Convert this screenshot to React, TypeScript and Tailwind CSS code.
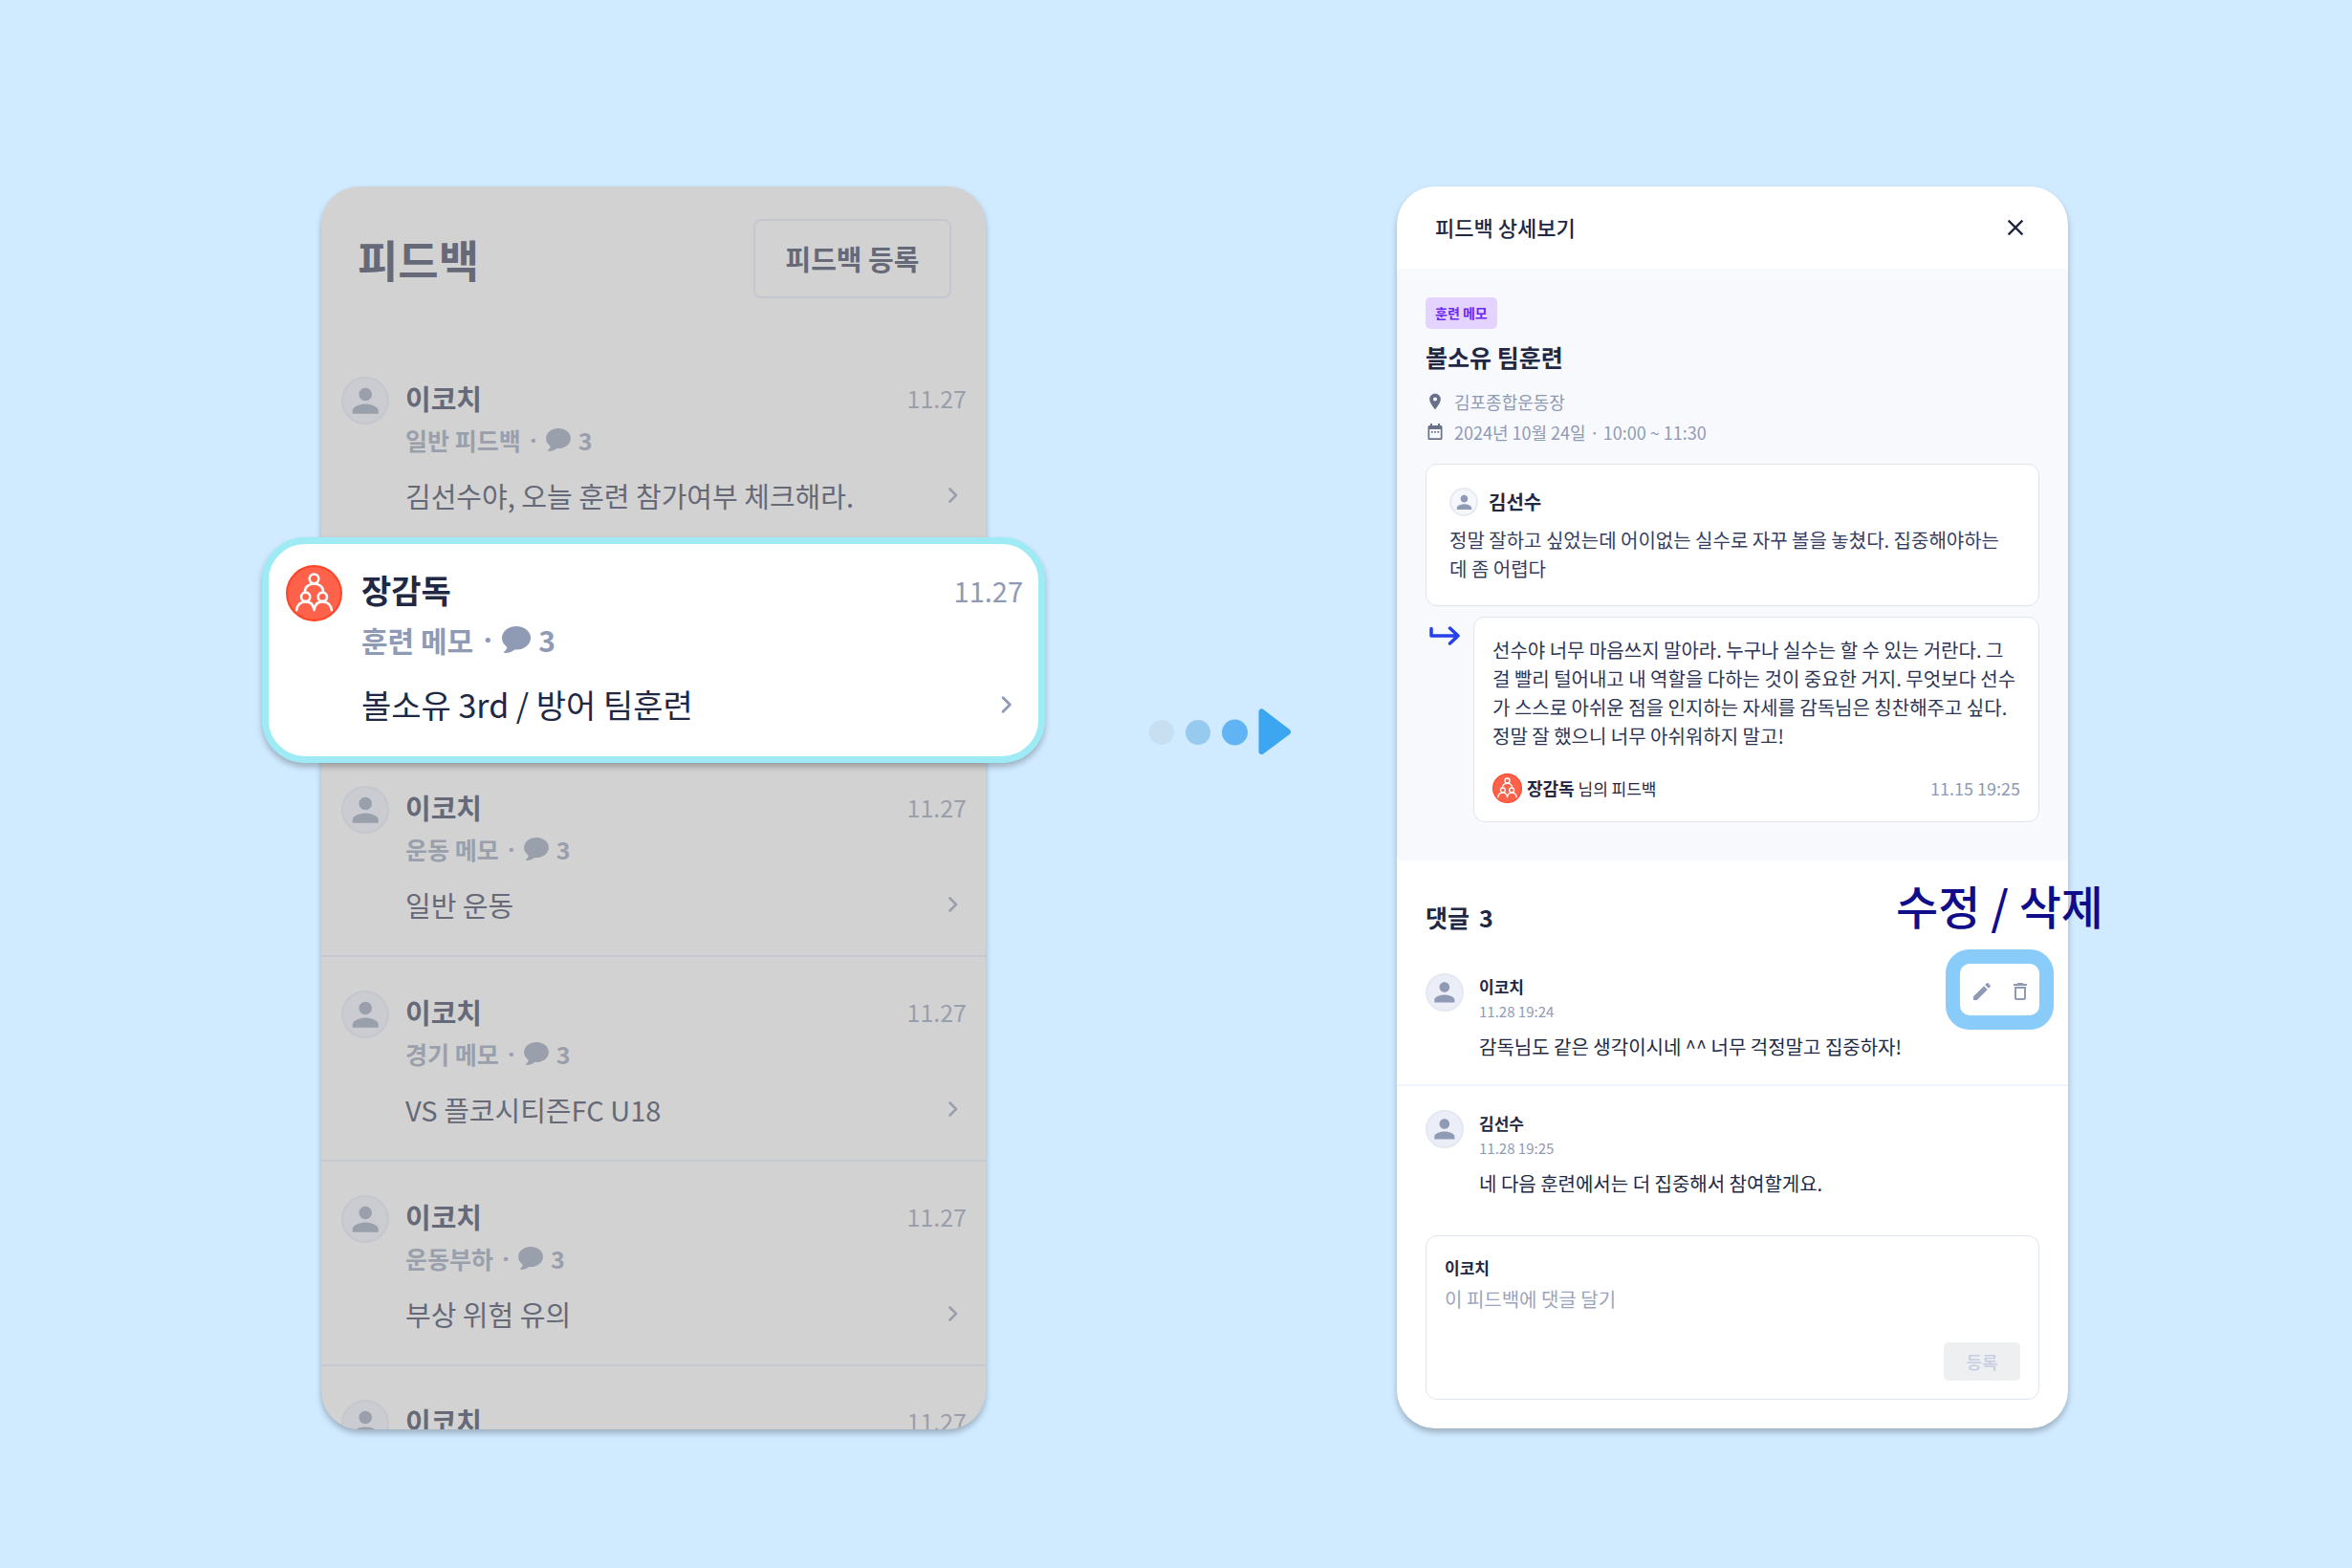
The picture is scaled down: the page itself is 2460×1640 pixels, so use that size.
import { MdClose, MdDeleteOutline, MdEdit, MdPerson, MdPlace } from "react-icons/md";

type Feedback = { author: string; date: string; kind?: string; body?: string; count?: number };
type Reply = { author: string; time: string; body: string; editable?: boolean };

const selected: Feedback = { author: "장감독", kind: "훈련 메모", body: "볼소유 3rd / 방어 팀훈련", date: "11.27", count: 3 };

const feedbacks: Feedback[] = [
  { author: "이코치", kind: "일반 피드백", body: "김선수야, 오늘 훈련 참가여부 체크해라.", date: "11.27", count: 3 },
  selected,
  { author: "이코치", kind: "운동 메모", body: "일반 운동", date: "11.27", count: 3 },
  { author: "이코치", kind: "경기 메모", body: "VS 플코시티즌FC U18", date: "11.27", count: 3 },
  { author: "이코치", kind: "운동부하", body: "부상 위험 유의", date: "11.27", count: 3 },
  { author: "이코치", date: "11.27" },
];

const replies: Reply[] = [
  { author: "이코치", time: "11.28 19:24", body: "감독님도 같은 생각이시네 ^^ 너무 걱정말고 집중하자!", editable: true },
  { author: "김선수", time: "11.28 19:25", body: "네 다음 훈련에서는 더 집중해서 참여할게요." },
];

function Chevron({ className }: { className: string }) {
  return (
    <svg viewBox="0 0 12 18" className={className} fill="none" stroke="currentColor" strokeWidth="2.6" strokeLinecap="round" strokeLinejoin="round" aria-hidden="true">
      <path d="M2.5 2.5 9 9l-6.500 6.500" />
    </svg>
  );
}

function Bubble({ className }: { className: string }) {
  return (
    <svg viewBox="0 0 88 82" className={className} fill="currentColor" aria-hidden="true">
      <ellipse cx="44" cy="36" rx="44" ry="36" />
      <path d="M10 54c9 8 6 17-3 24-3 3-1 4 3 4 12 0 22-5 30-12z" />
    </svg>
  );
}

function TeamLogo({ className }: { className: string }) {
  return (
    <svg viewBox="0 0 60 60" className={className} fill="none" stroke="#fff" strokeWidth="2.600" strokeLinecap="round" strokeLinejoin="round" aria-hidden="true">
      <circle cx="30" cy="30" r="28.900" fill="#ff624b" stroke="#ff452a" strokeWidth="2.200" />
      <circle cx="30" cy="14.600" r="4.900" />
      <path d="M20.300 28a9.700 8.200 0 0 1 19.400 0" />
      <circle cx="21" cy="33.800" r="4.700" />
      <circle cx="39" cy="33.800" r="4.700" />
      <path d="M11.300 48c.6-5.500 4.300-9 9.700-9s8.400 3.500 9 9c.6-5.500 3.600-9 9-9s9.100 3.500 9.700 9" />
    </svg>
  );
}

function Person({ className }: { className: string }) {
  return (
    <span className={`flex shrink-0 items-center justify-center rounded-full border-2 ${className}`}>
      <MdPerson className="h-[88%] w-[88%]" aria-hidden="true" />
    </span>
  );
}

function FeedbackRow({ item }: { item: Feedback }) {
  return (
    <li className="flex h-[214px] border-b-2 border-[#c6c8cf] pr-5 pl-[21px] text-[#666978]">
      <Person className="mt-[35px] size-[50px] border-[#c5c7ce] bg-[#caccd1] text-[#9a9fac]" />
      <div className="ml-[17px] min-w-0 grow pt-[36px]">
        <div className="flex justify-between leading-[42px]">
          <strong className="text-[29px]">{item.author}</strong>
          <time className="text-[25px] text-[#9a9fac]">{item.date}</time>
        </div>
        {item.kind && (
          <p className="mt-[5px] flex items-center text-[25px] leading-[36px] font-bold text-[#9a9fac]">
            {item.kind}
            <span className="w-[26px] text-center font-['Noto_Sans']">·</span>
            <Bubble className="h-6 w-[26px]" />
            <span className="ml-2">{item.count}</span>
          </p>
        )}
        {item.body && (
          <a href="#detail" className="mt-[19px] flex items-center justify-between text-[29px] leading-[42px]">
            {item.body}
            <Chevron className="mr-2 h-[18px] w-3 text-[#9a9fac]" />
          </a>
        )}
      </div>
    </li>
  );
}

function SelectedFeedback({ item }: { item: Feedback }) {
  return (
    <article className="absolute -inset-x-[62px] top-[367px] flex rounded-[45px] border-7 border-[#9eebf5] bg-white pt-[22px] pr-4 pb-[29px] pl-[18px] text-[#212844] shadow-[0_4px_6px_rgba(0,0,0,0.25)]">
      <TeamLogo className="size-[59px] shrink-0" />
      <div className="ml-[20px] min-w-0 grow">
        <div className="flex justify-between pt-px leading-[50px]">
          <strong className="text-[34px]">{item.author}</strong>
          <time className="text-[29px] text-[#8f9ab5]">{item.date}</time>
        </div>
        <p className="mt-[5px] flex items-center text-[30px] leading-[44px] font-bold text-[#8f9ab5]">
          {item.kind}
          <span className="w-[30px] text-center font-['Noto_Sans']">·</span>
          <Bubble className="h-7 w-[30px]" />
          <span className="ml-2">{item.count}</span>
        </p>
        <a href="#detail" className="mt-[21px] flex items-center justify-between text-[34px] leading-[50px]">
          {item.body}
          <Chevron className="mr-[10px] h-[20px] w-[14px] text-[#8f9ab5]" />
        </a>
      </div>
    </article>
  );
}

function FlowArrow() {
  return (
    <svg viewBox="0 0 148 50" className="mt-[546px] h-[50px] w-[148px] shrink-0" role="img" aria-label="다음 화면">
      <circle cx="13" cy="25" r="13" fill="#c8dff2" />
      <circle cx="51" cy="25" r="13" fill="#96caef" />
      <circle cx="89.500" cy="25" r="13.500" fill="#60b4f3" />
      <path d="M117.500 3.500v41.500L145 24.500z" fill="#3ca6f1" stroke="#3ca6f1" strokeWidth="6" strokeLinejoin="round" />
    </svg>
  );
}

function CalendarIcon() {
  return (
    <svg viewBox="0 0 20 18" className="h-[18px] w-5" fill="#68708a" aria-hidden="true">
      <path fillRule="evenodd" d="M5 0h2v2h6V0h2v2h1a1.500 1.500 0 0 1 1.500 1.500v12A1.500 1.500 0 0 1 16 17H4a1.500 1.500 0 0 1-1.500-1.500v-12A1.500 1.500 0 0 1 4 2h1zM4.200 6v9.300h11.600V6z" />
      <path d="M6 8h1.700v1.700H6zM9.200 8h1.700v1.700H9.200zM12.400 8h1.700v1.700h-1.700z" />
    </svg>
  );
}

function ReplyItem({ reply }: { reply: Reply }) {
  return (
    <li className="relative flex h-[143px] border-b-2 border-[#f0f3f9] px-[30px] pt-[25px] last:border-b-0">
      <Person className="size-[40px] border-[#e3e8f1] bg-[#ebeef6] text-[#8f9ab5]" />
      <div className="ml-4">
        <strong className="block text-[17px] leading-[28px]">{reply.author}</strong>
        <time className="block text-[15px] leading-[24px] text-[#8f9ab5]">{reply.time}</time>
        <p className="mt-[10px] text-[20px] leading-[30px]">{reply.body}</p>
      </div>
      {reply.editable && (
        <div className="absolute top-0 right-[15px] flex h-[84px] w-[113px] items-center justify-center gap-4 rounded-[25px] border-15 border-[#89cbf9] bg-white pt-1 pl-[2px] text-[#8f9ab5]">
          <button type="button" aria-label="수정">
            <MdEdit className="size-6" />
          </button>
          <button type="button" aria-label="삭제">
            <MdDeleteOutline className="size-6" />
          </button>
          <span className="absolute -top-[97px] -right-[67px] text-[48px] leading-[70px] font-medium whitespace-nowrap text-[#100c8a]">수정 / 삭제</span>
        </div>
      )}
    </li>
  );
}

export default function App() {
  return (
    <main className="flex min-h-screen items-start justify-center bg-[#d0eaff] pt-[195px] pb-20 pl-[39px] font-['Noto_Sans_CJK_KR',sans-serif] text-[#212844]">
      <section className="relative w-full max-w-[695px]">
        <div className="max-h-[1300px] overflow-hidden rounded-[40px] bg-[#d2d2d2] shadow-[0_4px_6px_rgba(0,0,0,0.25)]">
          <header className="flex h-[164px] items-start justify-between pt-[34px] pr-[36px] pl-[38px] text-[#666978]">
            <h1 className="text-[46px] leading-[82px] font-bold">피드백</h1>
            <button type="button" className="h-[83px] w-[207px] rounded-lg border-2 border-[#c5c7d0] text-[29px] font-bold">피드백 등록</button>
          </header>
          <ul>
            {feedbacks.map((item, i) =>
              item === selected ? <li key={i} className="h-[214px]" /> : <FeedbackRow key={i} item={item} />
            )}
          </ul>
        </div>
        <SelectedFeedback item={selected} />
      </section>

      <div className="flex w-full max-w-[430px] justify-center pl-[60px]">
        <FlowArrow />
      </div>

      <section id="detail" className="w-full max-w-[702px] rounded-[40px] bg-white shadow-[0_4px_6px_rgba(0,0,0,0.25)]">
        <header className="flex h-[86px] items-center justify-between pr-[41px] pb-px pl-10">
          <h2 className="text-[22px] font-medium">피드백 상세보기</h2>
          <button type="button" aria-label="닫기">
            <MdClose className="size-7" />
          </button>
        </header>

        <div className="bg-[#f8f9fd] px-[30px] pt-[30px] pb-10">
          <span className="inline-block rounded-[5px] bg-[#e5d3ff] px-[10px] text-[14px] leading-[33px] font-bold text-[#6a27f5]">훈련 메모</span>
          <h3 className="mt-[9px] text-[25px] leading-[40px] font-bold">볼소유 팀훈련</h3>
          <p className="mt-[11px] flex h-8 items-center gap-[10px] text-[18px] text-[#8f9ab5]">
            <MdPlace className="size-5 text-[#68708a]" aria-hidden="true" />
            김포종합운동장
          </p>
          <p className="flex h-8 items-center gap-[10px] text-[18px] text-[#8f9ab5]">
            <CalendarIcon />
            2024년 10월 24일 · 10:00 ~ 11:30
          </p>

          <article className="mt-[17px] rounded-xl border border-[#dfe5ef] bg-white px-6 pt-6 pb-[23px]">
            <div className="flex items-center gap-[11px]">
              <Person className="size-[30px] border-[#e6eaf3] bg-[#f5f7fc] text-[#8f9ab5]" />
              <strong className="text-[20px] leading-[30px]">김선수</strong>
            </div>
            <p className="mt-[10px] text-[20px] leading-[30px] text-[#353e5f]">정말 잘하고 싶었는데 어이없는 실수로 자꾸 볼을 놓쳤다. 집중해야하는데 좀 어렵다</p>
          </article>

          <div className="mt-[11px] flex">
            <svg viewBox="0 0 34 30" className="mt-1 mr-[13px] ml-[3px] h-[30px] w-[34px] shrink-0" fill="none" stroke="#2541eb" strokeWidth="3.500" strokeLinecap="round" strokeLinejoin="round" aria-hidden="true">
              <path d="M3 8.500v7.500h28M22.500 8l8.500 8-8.500 8" />
            </svg>
            <article className="min-w-0 grow rounded-xl border border-[#dfe5ef] bg-white p-[19px]">
              <p className="text-[20px] leading-[30px] text-[#2c3555]">
                선수야 너무 마음쓰지 말아라. 누구나 실수는 할 수 있는 거란다. 그걸 빨리 털어내고 내 역할을 다하는 것이 중요한 거지. 무엇보다 선수가 스스로 아쉬운 점을 인지하는 자세를 감독님은 칭찬해주고 싶다. 정말 잘 했으니 너무 아쉬워하지 말고!
              </p>
              <footer className="mt-[24px] flex items-center text-[17px] leading-[31px]">
                <TeamLogo className="mr-[5px] size-[31px]" />
                <span>
                  <strong className="text-[18px]">장감독</strong> 님의 피드백
                </span>
                <time className="ml-auto text-[18px] text-[#8f9ab5]">11.15 19:25</time>
              </footer>
            </article>
          </div>
        </div>

        <h3 className="flex gap-[10px] px-[30px] pt-[39px] pb-[14px] text-[25px] leading-[40px] font-bold">
          댓글 <span>3</span>
        </h3>
        <ul>
          {replies.map((reply) => (
            <ReplyItem key={reply.time} reply={reply} />
          ))}
        </ul>

        <form className="mx-[30px] mt-[13px] mb-[30px] flex flex-col rounded-xl border border-[#dfe5ef] px-[19px] pt-[18px] pb-[19px]">
          <label htmlFor="comment" className="text-[17px] leading-[30px] font-bold">이코치</label>
          <textarea id="comment" placeholder="이 피드백에 댓글 달기" className="mt-[3px] h-[60px] resize-none text-[20px] leading-[30px] outline-none placeholder:text-[#9aa4bd]" />
          <button type="submit" disabled className="h-10 w-20 self-end rounded-[5px] bg-[#eeeff1] text-[18px] font-medium text-[#c5cde0]">등록</button>
        </form>
      </section>
    </main>
  );
}
